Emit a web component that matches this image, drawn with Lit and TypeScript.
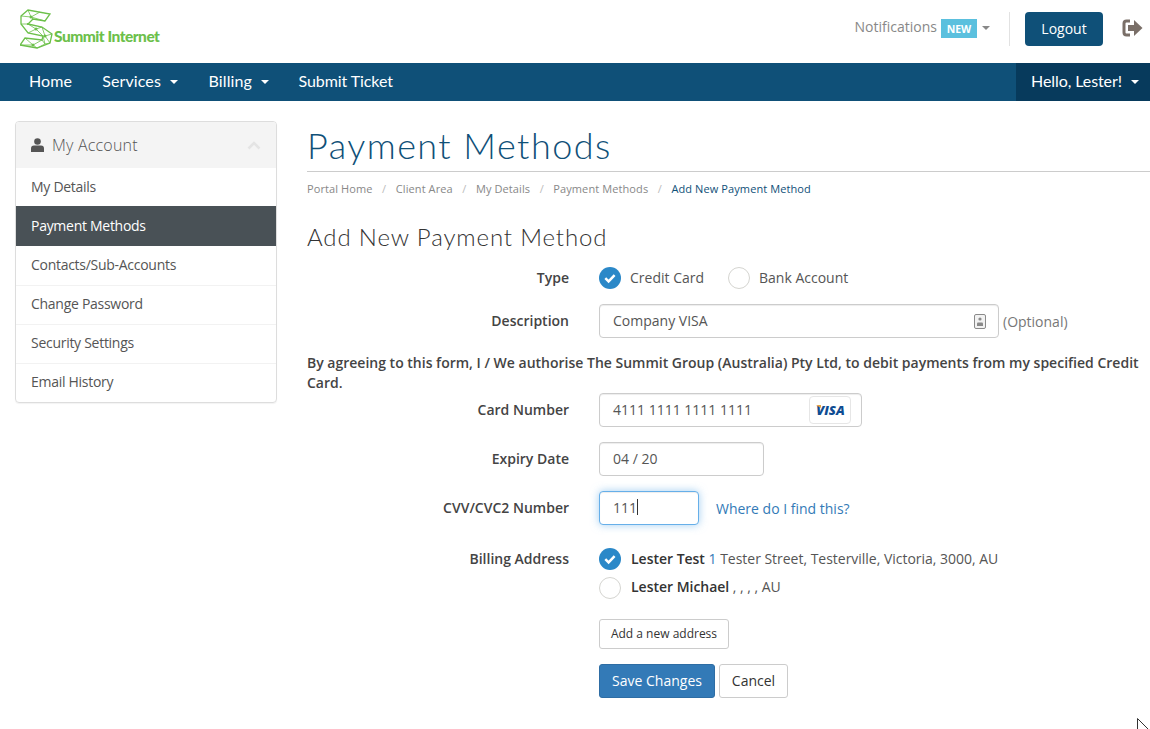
import { LitElement, html, css } from "lit";
import { customElement } from "lit/decorators.js";

const check = html`<svg class="rd" viewBox="0 0 22 22"><circle cx="11" cy="11" r="11" fill="#2b88c8"/><path d="M6.300 11.200l3.300 3.200 6-6.200" fill="none" stroke="#fff" stroke-width="2.500"/></svg>`;
const empty = html`<svg class="rd" viewBox="0 0 22 22"><circle cx="11" cy="11" r="10.500" fill="#fff" stroke="#d4d4d0"/></svg>`;
const caret = html`<i class="caret"></i>`;

@customElement("app-root")
export class AppRoot extends LitElement {
  static styles = css`
    :host { display: block; height: 729px; overflow: hidden; background: #fff; font-family: "Open Sans", sans-serif; font-size: 14px; color: #333; }
    * { box-sizing: border-box; }
    .head { height: 63px; display: flex; align-items: center; justify-content: space-between; padding: 0 7px 6px 20px; }
    .logo { display: flex; align-items: flex-end; height: 40px; margin-top: 1px; }
    .logo svg { width: 34px; height: 40px; display: block; }
    .logo span { font-family: Lato, sans-serif; font-weight: 900; font-size: 15.5px; letter-spacing: -0.5px; color: #6cc04a; line-height: 20px; margin-bottom: 3px; }
    .hr { display: flex; align-items: center; }
    .notif { color: #888; font-size: 14px; display: flex; align-items: center; margin-right: 19px; margin-top: -4px; }
    .new { background: #5bc0de; color: #fff; font-weight: 700; font-size: 10.5px; width: 36px; height: 19px; display: inline-flex; align-items: center; justify-content: center; margin: 4px 5px 0 4px; }
    .notif .caret { border-top-color: #888; margin-left: 0; margin-top: 3px; }
    .sep { width: 1px; height: 34px; background: #e2e2e2; margin-right: 15px; }
    .logout { background: #0f5078; color: #fff; width: 78px; height: 34px; border-radius: 4px; display: flex; align-items: center; justify-content: center; font-size: 14px; margin-right: 19px; }
    .exit { width: 21px; height: 18px; display: block; margin-top: -2px; }
    .nav { height: 38px; background: #0f5078; color: #fff; display: flex; align-items: center; font-family: Lato, sans-serif; font-size: 16px; letter-spacing: 0.12px; padding-left: 14px; }
    .nav a { padding: 0 15px 3px 15px; display: flex; align-items: center; height: 38px; }
    .nav a.tight { letter-spacing: -0.08px; margin-left: -1px; }
    .caret { display: inline-block; width: 0; height: 0; border-left: 4px solid transparent; border-right: 4px solid transparent; border-top: 4px solid #fff; margin-left: 9.500px; }
    .nav a .caret { margin-top: 3px; }
    .nav .hello { margin-left: auto; background: #073a5c; width: 134px; padding: 0 0 3px 15px; letter-spacing: -0.08px; }
    .main { display: flex; padding: 20px 0 0 15px; }
    .side { width: 262px; flex: none; align-self: flex-start; border: 1px solid #ddd; border-radius: 4px; box-shadow: 0 1px 1px rgba(0,0,0,.05); margin-right: 30px; overflow: hidden; }
    .side h3 { margin: 0; height: 46px; background: #f4f4f4; display: flex; align-items: center; padding: 0 15px; font-weight: 300; font-size: 16px; color: #555; letter-spacing: 0.2px; }
    .side h3 svg.u { width: 13px; height: 14px; margin-right: 8px; }
    .side h3 svg.c { width: 14px; height: 9px; margin-left: auto; margin-right: 0; }
    .side a { display: flex; align-items: center; height: 39px; padding: 0 15px 4px; font-size: 14px; color: #555; border-top: 1px solid #f2f2f2; letter-spacing: -0.28px; }
    .side a:first-of-type { border-top: 0; height: 38px; padding-bottom: 2px; }
    .side a.on { background: #495156; color: #fff; height: 40px; border: 0; padding-bottom: 2px; }
    .side a.on + a { border-top: 0; padding-bottom: 2px; }
    .content { flex: 1; min-width: 0; }
    h1 { margin: 0; font-family: Lato, sans-serif; font-weight: 300; font-size: 36px; line-height: 48px; color: #0f5078; height: 51px; border-bottom: 1px solid #ccc; letter-spacing: 1.45px; }
    .crumb { display: flex; font-size: 11px; color: #888; margin-top: 9px; height: 16px; line-height: 16px; letter-spacing: 0.1px; }
    .crumb b { font-weight: 400; color: #bbb; padding: 0 9.500px; }
    .crumb .cur { color: #0f5078; }
    h2 { margin: 24px 0 0; font-family: Lato, sans-serif; font-weight: 300; font-size: 24px; line-height: 32px; color: #333; letter-spacing: 0.86px; }
    .row { display: flex; }
    .lbl { width: 262px; flex: none; text-align: right; font-weight: 600; color: #444; font-size: 14px; padding-bottom: 2px; }
    .val { margin-left: 30px; display: flex; align-items: center; }
    .rd { width: 22px; height: 22px; flex: none; display: block; }
    .opt { display: flex; align-items: center; gap: 9px; color: #555; }
    .opt span { padding-bottom: 2px; }
    .input { height: 34px; border: 1px solid #ccc; border-radius: 4px; padding: 0 13px 2px; display: flex; align-items: center; color: #555; box-shadow: inset 0 1px 1px rgba(0,0,0,.075); background: #fff; }
    .input svg, .input .visa { margin-top: 2px; }
    .t { margin-top: 14px; align-items: center; height: 22px; }
    .d { margin-top: 15px; align-items: center; height: 34px; }
    .note { margin: 15px 0 0; font-weight: 600; color: #444; line-height: 20px; }
    .link { color: #337ab7; margin-left: 17px; }
    .opt-note { color: #777; margin-left: 4px; }
    .addr { display: flex; align-items: center; gap: 10px; height: 22px; color: #555; white-space: nowrap; letter-spacing: -0.02px; }
    .addr > span { padding-bottom: 2px; }
    .addr.up > span { padding-bottom: 4px; }
    .addr b { font-weight: 600; color: #333; }
    .addr em { font-style: normal; color: #337ab7; }
    .btn { border: 1px solid #ccc; border-radius: 3px; background: #fff; color: #333; display: flex; align-items: center; justify-content: center; padding-bottom: 2px; }
    .focus { border-color: #66afe9; box-shadow: inset 0 1px 1px rgba(0,0,0,.075), 0 0 8px rgba(102,175,233,.6); }
    .cursor { width: 1px; height: 16px; background: #333; }
    .visa { position: relative; margin-left: auto; margin-right: -3px; width: 42px; height: 28px; border: 1px solid #e6e6e6; border-radius: 4px; display: flex; align-items: center; justify-content: center; font: italic 800 13px "Open Sans", sans-serif; color: #0f4c92; padding-left: 1px; }
    .visa::before { content: ""; position: absolute; left: 6px; top: 8px; width: 5px; height: 3px; background: #e8a33d; clip-path: polygon(0 0, 100% 0, 100% 100%); }
    .col { margin-left: 292px; }
    .add { margin-top: 20px; width: 130px; height: 30px; font-size: 12px; }
    .actions { margin-top: 15px; display: flex; gap: 4px; }
    .save { width: 116px; height: 34px; background: #337ab7; border-color: #2e6da4; color: #fff; }
    .cancel { width: 69px; height: 34px; }
    .gap24 { gap: 24px; }
    .cursor-mark { position: absolute; left: 1137px; top: 718px; width: 12px; height: 11px; }
  `;

  render() {
    return html`
      <div class="head">
        <div class="logo">
          <svg viewBox="0 0 34 40" fill="none" stroke="#6cc04a" stroke-width=".8">
            <path d="M1 7L8 1l22 4-5 7-12-2-5 5 14 3 10 7-2 9-13 5L0 36l5-7 17 2 1-4-15-3-7-9z" stroke-width="1.300"/>
            <path d="M8 1l3 7 9-5M11 8l14 4M11 8L1 7M11 8l2 2M8 15L1 15M8 15l8 5 6-2M16 20l-8 4M16 20l7 7M22 18l3 9 7-2M25 27l5 7M23 27l2 8 5-1M25 35l-8 4M22 31l3 4M22 31l-9 5-8-7M13 36l-13 0M13 36l4 3"/>
            <g fill="#6cc04a" stroke="none"><circle cx="11" cy="8" r="1.500"/><circle cx="16" cy="20" r="1.500"/><circle cx="25" cy="27" r="1.500"/><circle cx="13" cy="36" r="1.500"/><circle cx="8" cy="15" r="1.100"/></g>
          </svg>
          <span>Summit Internet</span>
        </div>
        <div class="hr">
          <div class="notif">Notifications<span class="new">NEW</span>${caret}</div>
          <div class="sep"></div>
          <div class="logout">Logout</div>
          <svg class="exit" viewBox="0 0 21 18"><path d="M8 2H4.500Q2 2 2 4.500v9Q2 16 4.500 16H8" fill="none" stroke="#7a6f68" stroke-width="3"/><path d="M6 6h6V1l8.500 8L12 17v-5H6z" fill="#7a6f68"/></svg>
        </div>
      </div>
      <div class="nav">
        <a>Home</a><a>Services${caret}</a><a>Billing${caret}</a><a class="tight">Submit Ticket</a>
        <a class="hello">Hello, Lester!${caret}</a>
      </div>
      <div class="main">
        <div class="side">
          <h3>
            <svg class="u" viewBox="0 0 13 14"><circle cx="6.500" cy="3.500" r="3.300" fill="#555"/><path d="M0 14v-3.500Q0 7.500 3 7.500h7q3 0 3 3V14z" fill="#555"/></svg>
            My Account
            <svg class="c" viewBox="0 0 14 9"><path d="M1.500 7.500L7 2l5.500 5.500" fill="none" stroke="#e4e4e4" stroke-width="2.500"/></svg>
          </h3>
          <a>My Details</a><a class="on">Payment Methods</a><a>Contacts/Sub-Accounts</a><a>Change Password</a><a>Security Settings</a><a>Email History</a>
        </div>
        <div class="content">
          <h1>Payment Methods</h1>
          <div class="crumb"><span>Portal Home</span><b>/</b><span>Client Area</span><b>/</b><span>My Details</span><b>/</b><span>Payment Methods</span><b>/</b><span class="cur">Add New Payment Method</span></div>
          <h2>Add New Payment Method</h2>
          <div class="row t"><div class="lbl">Type</div><div class="val gap24"><span class="opt">${check}<span>Credit Card</span></span><span class="opt">${empty}<span>Bank Account</span></span></div></div>
          <div class="row d"><div class="lbl">Description</div><div class="val"><div class="input" style="width:400px">Company VISA
            <svg style="margin-left:auto;margin-right:-1px" width="12" height="15" viewBox="0 0 12 15"><rect x=".5" y=".5" width="11" height="14" rx="1.500" fill="#f2f2f2" stroke="#8a8a8a"/><circle cx="6" cy="5" r="1.600" fill="#8a8a8a"/><path d="M3 12V9.500Q3 8.500 4 8.500h4q1 0 1 1V12z" fill="#8a8a8a"/></svg>
          </div><span class="opt-note">(Optional)</span></div></div>
          <p class="note">By agreeing to this form, I / We authorise The Summit Group (Australia) Pty Ltd, to debit payments from my specified Credit Card.</p>
          <div class="row d" style="margin-top:0"><div class="lbl">Card Number</div><div class="val"><div class="input" style="width:263px">4111 1111 1111 1111<span class="visa">VISA</span></div></div></div>
          <div class="row d"><div class="lbl">Expiry Date</div><div class="val"><div class="input" style="width:165px">04 / 20</div></div></div>
          <div class="row d"><div class="lbl">CVV/CVC2 Number</div><div class="val"><div class="input focus" style="width:100px">111<span class="cursor"></span></div><span class="link">Where do I find this?</span></div></div>
          <div class="row" style="margin-top:23px;align-items:center;height:22px"><div class="lbl">Billing Address</div><div class="val"><span class="addr">${check}<span><b>Lester Test</b> <em>1</em> Tester Street, Testerville, Victoria, 3000, AU</span></span></div></div>
          <div class="col" style="margin-top:7px"><span class="addr up">${empty}<span><b>Lester Michael</b> , , , , AU</span></span></div>
          <div class="col btn add">Add a new address</div>
          <div class="col actions">
            <div class="btn save">Save Changes</div>
            <div class="btn cancel">Cancel</div>
          </div>
        </div>
      </div>
      <svg class="cursor-mark" viewBox="0 0 12 11"><path d="M.5 11V.5L11 11" fill="none" stroke="#333"/></svg>
    `;
  }
}
